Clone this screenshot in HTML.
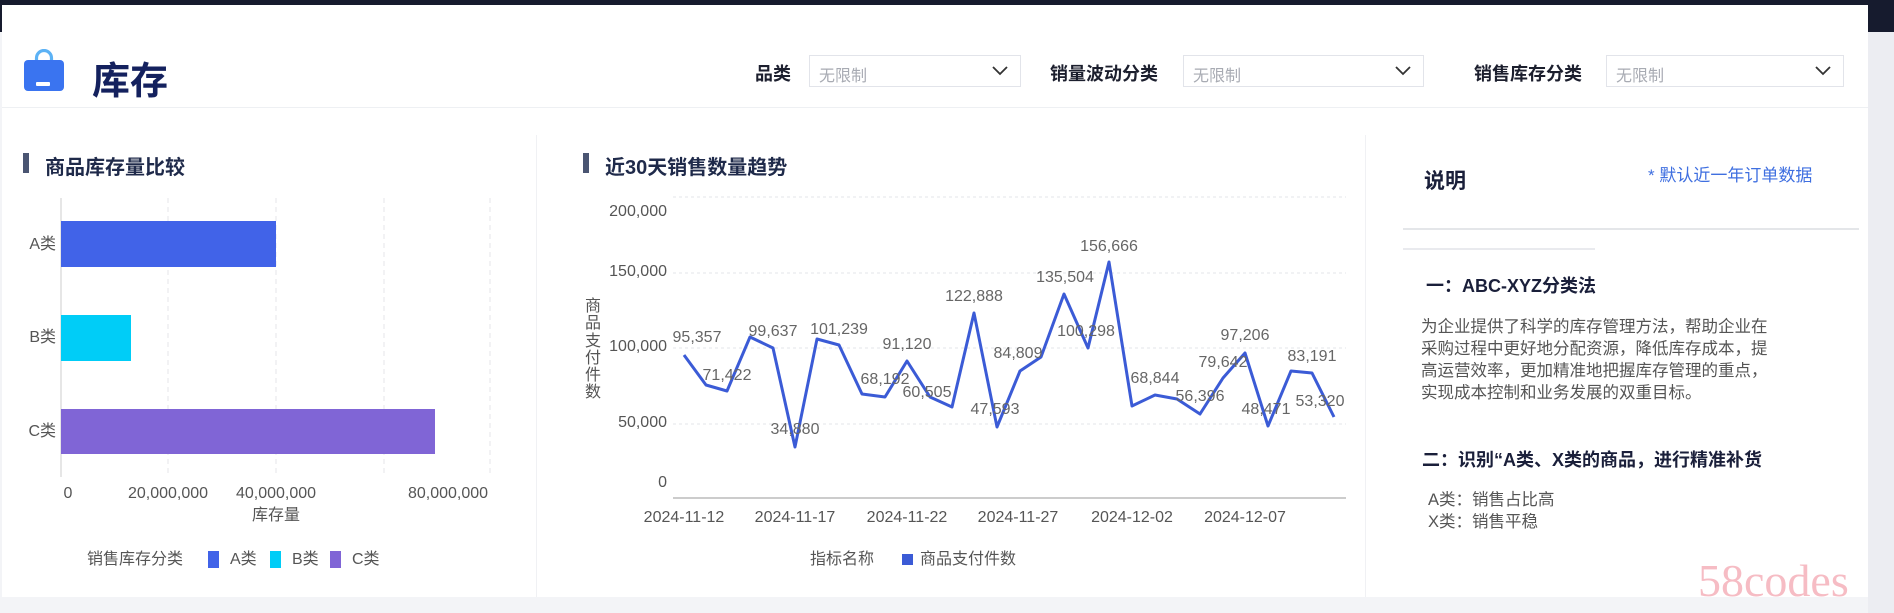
<!DOCTYPE html>
<html><head><meta charset="utf-8"><style>
*{margin:0;padding:0;box-sizing:border-box}
body{width:1894px;height:613px;overflow:hidden;background:#f3f4f7;font-family:"Liberation Sans","Noto Sans CJK SC",sans-serif;position:relative}
.a{position:absolute;white-space:nowrap}
.lbl{font-size:18px;font-weight:bold;color:#1c1f2e;top:60px}
.sel{height:32px;top:55px;border:1px solid #e2e4ea;background:#fff}
.sel span{position:absolute;left:9px;top:6px;font-size:16px;color:#a8abb3}
.sel svg{position:absolute;right:12px;top:10px}
.ttl{font-size:20px;font-weight:bold;color:#1f2a4a}
.bar{background:#4a5572;width:6px;height:20px}
.p{font-size:16.5px;color:#555;line-height:22px}
</style></head><body>
<div class="a" style="left:0;top:0;width:1894px;height:5px;background:#161b2e"></div>
<div class="a" style="left:0;top:0;width:2px;height:32px;background:#161b2e"></div>
<div class="a" style="left:1868px;top:0;width:26px;height:32px;background:#161b2e"></div>
<div class="a" style="left:1868px;top:32px;width:26px;height:581px;background:#ecedf2"></div>
<div class="a" style="left:2px;top:5px;width:1866px;height:592px;background:#fff"></div>
<div class="a" style="left:2px;top:107px;width:1866px;height:1px;background:#eef0f3"></div>
<div class="a" style="left:536px;top:135px;width:1px;height:462px;background:#f0f1f4"></div>
<div class="a" style="left:1365px;top:135px;width:1px;height:462px;background:#f0f1f4"></div>

<svg class="a" style="left:22px;top:49px" width="44" height="44" viewBox="0 0 44 44">
<path d="M14.5 13 V9 a7.5 7.5 0 0 1 15 0 V13" fill="none" stroke="#5cb2f5" stroke-width="3.2"/>
<rect x="2" y="11" width="40" height="31" rx="4" fill="#3a74f0"/>
<rect x="14" y="33" width="14" height="4" rx="1" fill="#fff"/>
</svg>
<div class="a" style="left:92px;top:50px;font-size:38px;font-weight:bold;color:#14215e">库存</div>

<div class="a lbl" style="left:755px">品类</div>
<div class="a sel" style="left:809px;width:212px"><span>无限制</span><svg width="16" height="10"><path d="M1 1 L8 8 L15 1" fill="none" stroke="#333" stroke-width="1.8"/></svg></div>
<div class="a lbl" style="left:1050px">销量波动分类</div>
<div class="a sel" style="left:1183px;width:241px"><span>无限制</span><svg width="16" height="10"><path d="M1 1 L8 8 L15 1" fill="none" stroke="#333" stroke-width="1.8"/></svg></div>
<div class="a lbl" style="left:1474px">销售库存分类</div>
<div class="a sel" style="left:1606px;width:238px"><span>无限制</span><svg width="16" height="10"><path d="M1 1 L8 8 L15 1" fill="none" stroke="#333" stroke-width="1.8"/></svg></div>

<div class="a bar" style="left:23px;top:153px"></div>
<div class="a ttl" style="left:45px;top:151px">商品库存量比较</div>
<div class="a bar" style="left:583px;top:153px"></div>
<div class="a ttl" style="left:605px;top:151px">近30天销售数量趋势</div>

<svg class="a" style="left:0;top:0" width="1894" height="613" font-family="Liberation Sans, Noto Sans CJK SC, sans-serif">
<g stroke="#e4e6ea" stroke-dasharray="5,4">
<line x1="168" y1="198" x2="168" y2="477"/><line x1="276" y1="198" x2="276" y2="477"/><line x1="384" y1="198" x2="384" y2="477"/><line x1="490" y1="198" x2="490" y2="477"/>
</g>
<line x1="61" y1="198" x2="61" y2="477" stroke="#ccc"/>
<rect x="61" y="221" width="215" height="46" fill="#4163e8"/>
<rect x="61" y="315" width="70" height="46" fill="#00cdf7"/>
<rect x="61" y="409" width="374" height="45" fill="#8065d6"/>
<g font-size="16" fill="#555" text-anchor="end" dominant-baseline="middle">
<text x="56" y="245">A类</text><text x="56" y="338">B类</text><text x="56" y="432">C类</text></g>
<g font-size="16" fill="#555" text-anchor="middle" dominant-baseline="middle">
<text x="68" y="494">0</text><text x="168" y="494">20,000,000</text><text x="276" y="494">40,000,000</text><text x="448" y="494">80,000,000</text>
<text x="276" y="516">库存量</text></g>
<g font-size="16" fill="#555" dominant-baseline="middle">
<text x="87" y="560">销售库存分类</text>
<rect x="208" y="551" width="11" height="17" fill="#4163e8"/><text x="230" y="560">A类</text>
<rect x="270" y="551" width="11" height="17" fill="#00cdf7"/><text x="292" y="560">B类</text>
<rect x="330" y="551" width="11" height="17" fill="#8065d6"/><text x="352" y="560">C类</text>
</g>

<g stroke="#e3e5e9" stroke-dasharray="3,3">
<line x1="673" y1="197" x2="1346" y2="197"/><line x1="673" y1="273" x2="1346" y2="273"/><line x1="673" y1="348" x2="1346" y2="348"/><line x1="673" y1="424" x2="1346" y2="424"/></g>
<line x1="673" y1="498" x2="1346" y2="498" stroke="#ccc" stroke-width="2"/>
<g font-size="16" fill="#555" text-anchor="end" dominant-baseline="middle">
<text x="667" y="212">200,000</text><text x="667" y="272">150,000</text><text x="667" y="347">100,000</text><text x="667" y="423">50,000</text><text x="667" y="483">0</text></g>
<g font-size="16" fill="#555" text-anchor="middle" dominant-baseline="middle">
<text x="593" y="307">商</text><text x="593" y="324">品</text><text x="593" y="342">支</text><text x="593" y="359">付</text><text x="593" y="376">件</text><text x="593" y="393">数</text>
<text x="684" y="518">2024-11-12</text><text x="795" y="518">2024-11-17</text><text x="907" y="518">2024-11-22</text><text x="1018" y="518">2024-11-27</text><text x="1132" y="518">2024-12-02</text><text x="1245" y="518">2024-12-07</text>
</g>
<polyline fill="none" stroke="#3b5bd6" stroke-width="3" stroke-linejoin="round" points="684,355 706,385 727,391 750,337 773,348 795,447 817,339 839,345 862,394 885,397 907,361 930,397 952,407 974,313 997,427 1020,371 1041,357 1064,294 1088,348 1109,262 1132,406 1155,395 1177,399 1200,414 1223,378 1245,353 1268,426 1291,371 1312,373 1334,417"/>
<g font-size="16" fill="#666" text-anchor="middle" dominant-baseline="middle">
<text x="697" y="338">95,357</text><text x="727" y="376">71,422</text><text x="773" y="332">99,637</text><text x="795" y="430">34,880</text><text x="839" y="330">101,239</text><text x="885" y="380">68,192</text><text x="907" y="345">91,120</text><text x="927" y="393">60,505</text><text x="974" y="297">122,888</text><text x="995" y="410">47,593</text><text x="1018" y="354">84,809</text><text x="1065" y="278">135,504</text><text x="1109" y="247">156,666</text><text x="1086" y="332">100,298</text><text x="1155" y="379">68,844</text><text x="1200" y="397">56,396</text><text x="1223" y="363">79,642</text><text x="1245" y="336">97,206</text><text x="1266" y="410">48,471</text><text x="1312" y="357">83,191</text><text x="1320" y="402">53,320</text>
</g>
<g font-size="16" fill="#555" dominant-baseline="middle">
<text x="810" y="560">指标名称</text><rect x="902" y="554" width="11" height="11" fill="#3b5bd6"/><text x="920" y="560">商品支付件数</text></g>

<line x1="1403" y1="229" x2="1859" y2="229" stroke="#dcdde2" stroke-width="1.5"/>
<line x1="1403" y1="249" x2="1595" y2="249" stroke="#e2e3e8" stroke-width="1.5"/>
</svg>

<div class="a" style="left:1424px;top:165px;font-size:21px;font-weight:bold;color:#1a1f3a">说明</div>
<div class="a" style="left:1648px;top:161px;font-size:17px;color:#3f6fe0">* 默认近一年订单数据</div>
<div class="a" style="left:1426px;top:272px;font-size:18px;font-weight:bold;color:#1a1f3a">一：ABC-XYZ分类法</div>
<div class="a p" style="left:1421px;top:316px">为企业提供了科学的库存管理方法，帮助企业在<br>采购过程中更好地分配资源，降低库存成本，提<br>高运营效率，更加精准地把握库存管理的重点，<br>实现成本控制和业务发展的双重目标。</div>
<div class="a" style="left:1422px;top:446px;font-size:18px;font-weight:bold;color:#1a1f3a">二：识别“A类、X类的商品，进行精准补货</div>
<div class="a p" style="left:1428px;top:489px">A类：销售占比高<br>X类：销售平稳</div>
<div class="a" style="left:1698px;top:554px;font-size:46px;font-family:'Liberation Serif',serif;color:#f6bcc4">58codes</div>
</body></html>
